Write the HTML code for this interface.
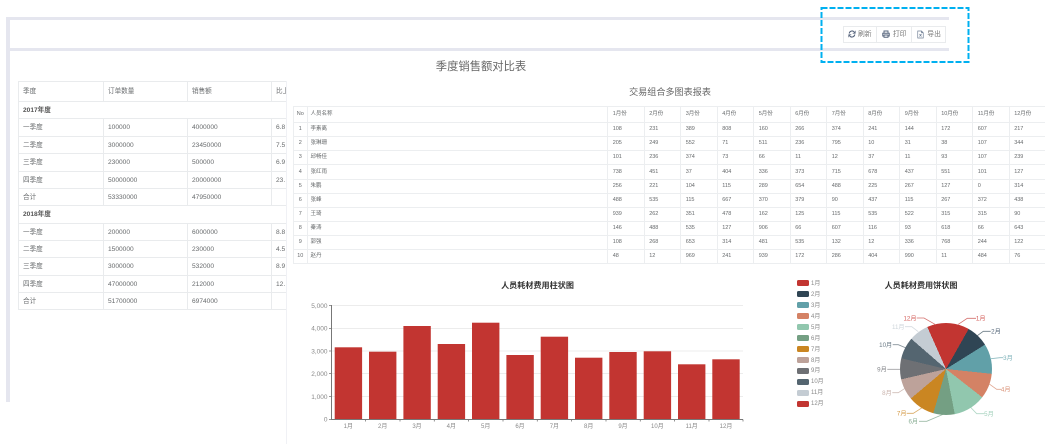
<!DOCTYPE html>
<html lang="zh">
<head>
<meta charset="utf-8">
<title>季度销售额对比表</title>
<style>
html,body{margin:0;padding:0;background:#fff;}
body{width:1049px;height:444px;overflow:hidden;}
#wrap{width:1049px;height:444px;position:relative;overflow:hidden;background:#fff;filter:blur(.35px);font-family:"Liberation Sans","Noto Sans CJK SC",sans-serif;color:#676a6c;}
.bar{position:absolute;background:#e5e6ef;}
.abs{position:absolute;white-space:nowrap;}
table{border-collapse:separate;border-spacing:0;table-layout:fixed;}
td{box-sizing:border-box;overflow:hidden;white-space:nowrap;padding:0;line-height:9px;}
#lt{position:absolute;left:18px;top:81px;width:268px;height:229px;overflow:hidden;}
#lt table{width:340px;border-top:1px solid #e9ebed;border-left:1px solid #e9ebed;}
#lt td{font-size:6.6px;padding-left:4px;border-right:1px solid #e9ebed;border-bottom:1px solid #e9ebed;}
#lt td.b{font-weight:bold;color:#555;}
#rt{position:absolute;left:293px;top:106px;width:752px;overflow:hidden;}
#rt table{width:752px;border-top:1px solid #eceef0;border-left:1px solid #eceef0;}
#rt td{font-size:5.5px;padding-left:4.7px;border-right:1px solid #eceef0;border-bottom:1px solid #eceef0;}
#rt td:first-child{padding-left:0;text-align:center;}
#rt td:nth-child(2){padding-left:3px;}
.btn{position:absolute;top:26px;height:17px;box-sizing:border-box;border:1px solid #e9ebed;font-size:6.8px;line-height:15px;color:#777;}
.btn svg{position:absolute;}
.btn span{position:absolute;top:0;}
.lg{position:absolute;left:797.3px;width:11.5px;height:6.4px;border-radius:1.5px;}
.ll{position:absolute;left:811px;font-size:6px;line-height:8px;color:#888;white-space:nowrap;}
#pie{position:absolute;left:900px;top:323px;width:92px;height:92px;border-radius:50%;background:conic-gradient(#c23531 0deg 29.5deg,#2f4554 29.5deg 58deg,#61a0a8 58deg 96deg,#d48265 96deg 128deg,#91c7ae 128deg 169deg,#749f83 169deg 196deg,#ca8622 196deg 230deg,#bda29a 230deg 257deg,#6e7074 257deg 283.5deg,#546570 283.5deg 311deg,#c4ccd3 311deg 336deg,#c23531 336deg 360deg);}
</style>
</head>
<body>
<div id="wrap">
<div class="bar" style="left:6px;top:17px;width:943px;height:3px"></div>
<div class="bar" style="left:6px;top:48px;width:943px;height:3px"></div>
<div class="bar" style="left:6px;top:17px;width:4px;height:385px"></div>
<div class="abs" style="left:286px;top:81px;width:1px;height:363px;background:#f0f1f5"></div>

<div class="btn" style="left:842.5px;width:34.5px">
<svg style="left:4px;top:3px" width="8" height="8" viewBox="0 0 16 16" fill="none" stroke="#56647c" stroke-width="2.2"><path d="M2.5 7A5.6 5.6 0 0 1 12.5 4.2L14 6M13.5 9A5.6 5.6 0 0 1 3.5 11.8L2 10"/><path d="M14.5 1.5V6.5H9.5M1.5 14.5V9.5H6.5" stroke-width="1.4"/></svg>
<span style="left:14.5px">刷新</span></div>
<div class="btn" style="left:876.5px;width:35px;border-left:0">
<svg style="left:5.5px;top:3px" width="8" height="8" viewBox="0 0 16 16" fill="none" stroke="#56647c" stroke-width="1.9"><path d="M4 6V2H12V6M4 12H1.5V6.5H14.5V12H12M4 10H12V14.5H4Z"/></svg>
<span style="left:16.5px">打印</span></div>
<div class="btn" style="left:911px;width:35px;border-left:0">
<svg style="left:6px;top:3px" width="7" height="9" viewBox="0 0 14 16" fill="none" stroke="#6d7c93" stroke-width="1.3"><path d="M1.5 1H9L12.5 4.5V15H1.5ZM9 1V4.5H12.5M5 7L9 12M9 7L5 12"/></svg>
<span style="left:16.3px">导出</span></div>

<svg class="abs" style="left:0;top:0" width="1049" height="70"><rect x="821.5" y="8" width="147" height="54" fill="none" stroke="#00b0f0" stroke-width="2" stroke-dasharray="6 2"/></svg>

<div class="abs" style="left:381px;width:200px;top:60px;text-align:center;font-size:11.3px;line-height:14px;color:#666">季度销售额对比表</div>
<div class="abs" style="left:570px;width:200px;top:86px;text-align:center;font-size:9.1px;line-height:12px;color:#666">交易组合多图表报表</div>

<div id="lt"><table>
<colgroup><col style="width:85px"><col style="width:84px"><col style="width:84px"><col style="width:87px"></colgroup>
<tr style="height:20px"><td>季度</td><td>订单数量</td><td>销售额</td><td>比上年同期</td></tr>
<tr style="height:17px"><td class="b" colspan="4">2017年度</td></tr>
<tr style="height:18px"><td>一季度</td><td>100000</td><td>4000000</td><td>6.8</td></tr>
<tr style="height:17px"><td>二季度</td><td>3000000</td><td>23450000</td><td>7.5</td></tr>
<tr style="height:18px"><td>三季度</td><td>230000</td><td>500000</td><td>6.9</td></tr>
<tr style="height:17px"><td>四季度</td><td>50000000</td><td>20000000</td><td>23.</td></tr>
<tr style="height:17px"><td>合计</td><td>53330000</td><td>47950000</td><td></td></tr>
<tr style="height:18px"><td class="b" colspan="4">2018年度</td></tr>
<tr style="height:17px"><td>一季度</td><td>200000</td><td>6000000</td><td>8.8</td></tr>
<tr style="height:17px"><td>二季度</td><td>1500000</td><td>230000</td><td>4.5</td></tr>
<tr style="height:18px"><td>三季度</td><td>3000000</td><td>532000</td><td>8.9</td></tr>
<tr style="height:17px"><td>四季度</td><td>47000000</td><td>212000</td><td>12.</td></tr>
<tr style="height:17px"><td>合计</td><td>51700000</td><td>6974000</td><td></td></tr>
</table></div>

<div id="rt"><table>
<colgroup><col style="width:13.5px"><col style="width:300.5px"><col span="12" style="width:36.5px"></colgroup>
<tr style="height:16px"><td>No</td><td>人员名称</td><td>1月份</td><td>2月份</td><td>3月份</td><td>4月份</td><td>5月份</td><td>6月份</td><td>7月份</td><td>8月份</td><td>9月份</td><td>10月份</td><td>11月份</td><td>12月份</td></tr>
<tr style="height:14px"><td>1</td><td>李素离</td><td>108</td><td>231</td><td>389</td><td>808</td><td>160</td><td>266</td><td>374</td><td>241</td><td>144</td><td>172</td><td>607</td><td>217</td></tr>
<tr style="height:14px"><td>2</td><td>张琳珊</td><td>205</td><td>249</td><td>552</td><td>71</td><td>511</td><td>236</td><td>795</td><td>10</td><td>31</td><td>38</td><td>107</td><td>344</td></tr>
<tr style="height:14px"><td>3</td><td>邱畅佳</td><td>101</td><td>236</td><td>374</td><td>73</td><td>66</td><td>11</td><td>12</td><td>37</td><td>11</td><td>93</td><td>107</td><td>239</td></tr>
<tr style="height:15px"><td>4</td><td>张红雨</td><td>738</td><td>451</td><td>37</td><td>404</td><td>336</td><td>373</td><td>715</td><td>678</td><td>437</td><td>551</td><td>101</td><td>127</td></tr>
<tr style="height:14px"><td>5</td><td>朱鹏</td><td>256</td><td>221</td><td>104</td><td>115</td><td>289</td><td>654</td><td>488</td><td>225</td><td>267</td><td>127</td><td>0</td><td>314</td></tr>
<tr style="height:14px"><td>6</td><td>张峰</td><td>488</td><td>535</td><td>115</td><td>667</td><td>370</td><td>379</td><td>90</td><td>437</td><td>115</td><td>267</td><td>372</td><td>438</td></tr>
<tr style="height:14px"><td>7</td><td>王琦</td><td>939</td><td>262</td><td>351</td><td>478</td><td>162</td><td>125</td><td>115</td><td>535</td><td>522</td><td>315</td><td>315</td><td>90</td></tr>
<tr style="height:14px"><td>8</td><td>秦涛</td><td>146</td><td>488</td><td>535</td><td>127</td><td>906</td><td>66</td><td>607</td><td>116</td><td>93</td><td>618</td><td>66</td><td>643</td></tr>
<tr style="height:14px"><td>9</td><td>郭强</td><td>108</td><td>268</td><td>653</td><td>314</td><td>481</td><td>535</td><td>132</td><td>12</td><td>336</td><td>768</td><td>244</td><td>122</td></tr>
<tr style="height:14px"><td>10</td><td>赵丹</td><td>48</td><td>12</td><td>969</td><td>241</td><td>939</td><td>172</td><td>286</td><td>404</td><td>990</td><td>11</td><td>484</td><td>76</td></tr>
</table></div>

<svg class="abs" style="left:0;top:270px" width="790" height="174" viewBox="0 270 790 174" font-family="'Liberation Sans','Noto Sans CJK SC',sans-serif">
<text x="537.5" y="288" text-anchor="middle" font-size="8.1" font-weight="bold" fill="#333">人员耗材费用柱状图</text>
<g stroke="#ececec" stroke-width="1">
<line x1="331" x2="743" y1="305.5" y2="305.5"/><line x1="331" x2="743" y1="328.5" y2="328.5"/><line x1="331" x2="743" y1="351" y2="351"/><line x1="331" x2="743" y1="373.5" y2="373.5"/><line x1="331" x2="743" y1="396.5" y2="396.5"/>
</g>
<g fill="#c23531">
<rect x="334.7" y="347.3" width="27.4" height="71.7"/>
<rect x="369" y="351.7" width="27.4" height="67.3"/>
<rect x="403.4" y="326" width="27.4" height="93"/>
<rect x="437.7" y="344" width="27.4" height="75"/>
<rect x="472" y="322.7" width="27.4" height="96.3"/>
<rect x="506.4" y="355" width="27.4" height="64"/>
<rect x="540.7" y="336.7" width="27.4" height="82.3"/>
<rect x="575" y="357.7" width="27.4" height="61.3"/>
<rect x="609.3" y="352" width="27.4" height="67"/>
<rect x="643.7" y="351.3" width="27.4" height="67.7"/>
<rect x="678" y="364.3" width="27.4" height="54.7"/>
<rect x="712.3" y="359.3" width="27.4" height="59.7"/>
</g>
<path d="M331.5 305V419.5H743" fill="none" stroke="#777" stroke-width="1"/>
<path d="M329 305.5h2.5M329 328.5h2.5M329 351h2.5M329 373.5h2.5M329 396.5h2.5M329 419.5h2.5M365.5 419.5v2M400 419.5v2M434.3 419.5v2M468.6 419.5v2M503 419.5v2M537.3 419.5v2M571.6 419.5v2M606 419.5v2M640.3 419.5v2M674.6 419.5v2M709 419.5v2M743 419.5v2" stroke="#777" stroke-width=".8" fill="none"/>
<g font-size="6.5" fill="#888" text-anchor="end">
<text x="327.5" y="307.8">5,000</text><text x="327.5" y="330.6">4,000</text><text x="327.5" y="353.3">3,000</text><text x="327.5" y="376">2,000</text><text x="327.5" y="398.8">1,000</text><text x="327.5" y="421.6">0</text>
</g>
<g font-size="6" fill="#888" text-anchor="middle">
<text x="348.3" y="428">1月</text><text x="382.7" y="428">2月</text><text x="417" y="428">3月</text><text x="451.3" y="428">4月</text><text x="485.7" y="428">5月</text><text x="520" y="428">6月</text><text x="554.4" y="428">7月</text><text x="588.7" y="428">8月</text><text x="623" y="428">9月</text><text x="657.4" y="428">10月</text><text x="691.7" y="428">11月</text><text x="726" y="428">12月</text>
</g>
</svg>

<div class="lg" style="top:280px;background:#c23531"></div><div class="ll" style="top:279.5px">1月</div>
<div class="lg" style="top:291px;background:#2f4554"></div><div class="ll" style="top:290.5px">2月</div>
<div class="lg" style="top:302px;background:#61a0a8"></div><div class="ll" style="top:301.5px">3月</div>
<div class="lg" style="top:313px;background:#d48265"></div><div class="ll" style="top:312.5px">4月</div>
<div class="lg" style="top:324px;background:#91c7ae"></div><div class="ll" style="top:323.5px">5月</div>
<div class="lg" style="top:335px;background:#749f83"></div><div class="ll" style="top:334.5px">6月</div>
<div class="lg" style="top:346px;background:#ca8622"></div><div class="ll" style="top:345.5px">7月</div>
<div class="lg" style="top:357px;background:#bda29a"></div><div class="ll" style="top:356.5px">8月</div>
<div class="lg" style="top:367.5px;background:#6e7074"></div><div class="ll" style="top:367px">9月</div>
<div class="lg" style="top:378.5px;background:#546570"></div><div class="ll" style="top:378px">10月</div>
<div class="lg" style="top:389.5px;background:#c4ccd3"></div><div class="ll" style="top:389px">11月</div>
<div class="lg" style="top:400.5px;background:#c23531"></div><div class="ll" style="top:400px">12月</div>

<div id="pie"></div>
<svg class="abs" style="left:860px;top:270px" width="189" height="174" viewBox="860 270 189 174" font-family="'Liberation Sans','Noto Sans CJK SC',sans-serif">
<text x="921" y="288" text-anchor="middle" font-size="8.1" font-weight="bold" fill="#333">人员耗材费用饼状图</text>
<g fill="none" stroke-width=".8" opacity=".7">
<path d="M958.3 324.3L967.3 318.3H976" stroke="#c23531"/>
<path d="M977.3 335.7L983.3 331.3H990.7" stroke="#2f4554"/>
<path d="M991 358.7L1000 357.7H1003.3" stroke="#61a0a8"/>
<path d="M988.3 383.3L996.7 389.3H1001" stroke="#d48265"/>
<path d="M970 406.7L976.7 413.7H984.3" stroke="#91c7ae"/>
<path d="M943.3 414.3L926.7 421.3H919" stroke="#749f83"/>
<path d="M922.7 407.3L913.3 413.3H906.7" stroke="#ca8622"/>
<path d="M905 388.3L898.3 392.7H892.3" stroke="#bda29a"/>
<path d="M900.7 369.3H887.3" stroke="#6e7074"/>
<path d="M906.7 348.3L898.3 344.7H892.7" stroke="#546570"/>
<path d="M918.3 331.7L911.7 326.7H905" stroke="#c4ccd3"/>
<path d="M935 324.3L924 318H916.7" stroke="#c23531"/>
</g>
<g font-size="6.2" text-anchor="middle">
<text x="980.7" y="320.6" fill="#d4605c">1月</text>
<text x="996" y="333.6" fill="#55677a">2月</text>
<text x="1008" y="360" fill="#7fb3ba">3月</text>
<text x="1005.7" y="391.6" fill="#d98f74">4月</text>
<text x="989" y="416" fill="#a2d0bb">5月</text>
<text x="913.3" y="423.6" fill="#8baf96">6月</text>
<text x="901.7" y="415.6" fill="#d49a46">7月</text>
<text x="887" y="395" fill="#c9b3ac">8月</text>
<text x="882" y="371.6" fill="#85878b">9月</text>
<text x="885.7" y="347" fill="#6a7a85">10月</text>
<text x="898.3" y="329" fill="#cdd4da">11月</text>
<text x="910" y="320.3" fill="#d4605c">12月</text>
</g>
</svg>
</div>
</body>
</html>
